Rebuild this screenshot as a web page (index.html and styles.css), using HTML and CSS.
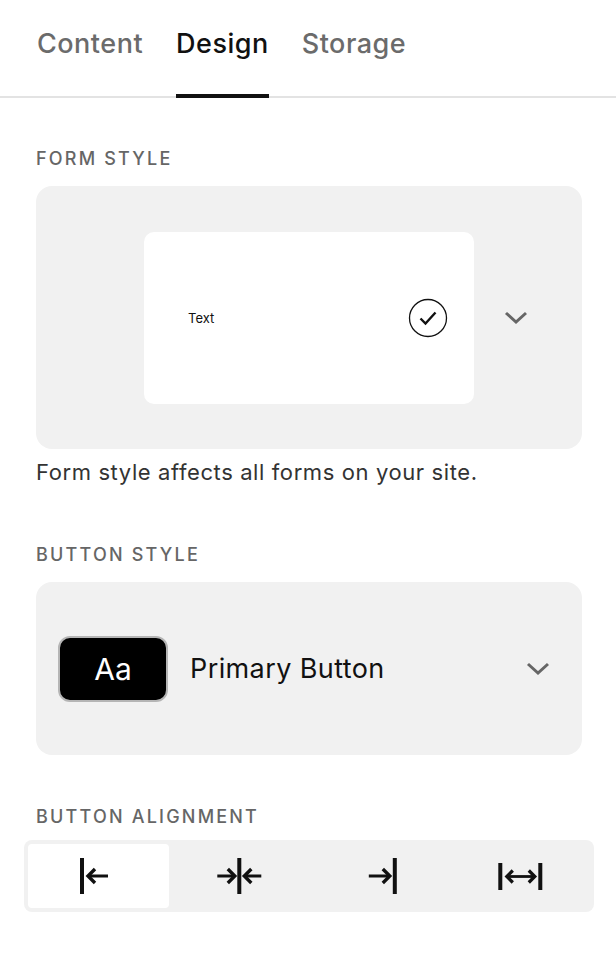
FILE: index.html
```html
<!DOCTYPE html>
<html>
<head>
<meta charset="utf-8">
<link rel="stylesheet" href="styles.css">
</head>
<body>
<div class="panel">
  <nav class="tabs">
    <div class="tab">Content</div>
    <div class="tab active">Design</div>
    <div class="tab">Storage</div>
  </nav>
  <section class="section s-form">
    <h2 class="label">FORM STYLE</h2>
    <div class="box form-box">
      <div class="form-card">
        <span class="card-text">Text</span>
        <svg class="check" width="40" height="40" viewBox="0 0 40 40"><circle cx="20" cy="20" r="18.5" fill="none" stroke="#111" stroke-width="1.3"/><path d="M12.5 20.5 L17.5 25.5 L27.5 14.5" fill="none" stroke="#111" stroke-width="2.4"/></svg>
      </div>
      <svg class="chev" width="24" height="16" viewBox="0 0 24 16"><path d="M2 3 L12 12 L22 3" fill="none" stroke="#666" stroke-width="3"/></svg>
    </div>
    <p class="hint">Form style affects all forms on your site.</p>
  </section>
  <section class="section s-button">
    <h2 class="label">BUTTON STYLE</h2>
    <div class="box button-box">
      <div class="aa">Aa</div>
      <span class="btn-name">Primary Button</span>
      <svg class="chev" width="24" height="16" viewBox="0 0 24 16"><path d="M2 3 L12 12 L22 3" fill="none" stroke="#666" stroke-width="3"/></svg>
    </div>
  </section>
  <section class="section s-align">
    <h2 class="label">BUTTON ALIGNMENT</h2>
    <div class="segmented">
      <div class="seg selected">
        <svg width="80" height="40" viewBox="0 0 80 40"><rect x="22" y="2" width="4" height="36" fill="#111"/><path d="M30 20 H50" stroke="#111" stroke-width="3"/><path d="M37 13 L30 20 L37 27" fill="none" stroke="#111" stroke-width="3.4"/></svg>
      </div>
      <div class="seg">
        <svg width="80" height="40" viewBox="0 0 80 40"><rect x="38.3" y="2" width="4" height="36" fill="#111"/><path d="M18.3 20 H35.3" stroke="#111" stroke-width="3"/><path d="M28.8 13 L35.8 20 L28.8 27" fill="none" stroke="#111" stroke-width="3.4"/><path d="M45.8 20 H62.3" stroke="#111" stroke-width="3"/><path d="M52.3 13 L45.3 20 L52.3 27" fill="none" stroke="#111" stroke-width="3.4"/></svg>
      </div>
      <div class="seg">
        <svg width="80" height="40" viewBox="0 0 80 40"><rect x="53.8" y="2" width="4" height="36" fill="#111"/><path d="M29.8 20 H50" stroke="#111" stroke-width="3"/><path d="M43.8 13 L50.8 20 L43.8 27" fill="none" stroke="#111" stroke-width="3.4"/></svg>
      </div>
      <div class="seg">
        <svg width="80" height="40" viewBox="0 0 80 40"><rect x="18.3" y="7" width="4" height="27" fill="#111"/><rect x="58.3" y="7" width="4" height="27" fill="#111"/><path d="M27 20.5 H54.5" stroke="#111" stroke-width="2.8"/><path d="M32.8 14.5 L26.8 20.5 L32.8 26.5" fill="none" stroke="#111" stroke-width="3.2"/><path d="M48.8 14.5 L54.8 20.5 L48.8 26.5" fill="none" stroke="#111" stroke-width="3.2"/></svg>
      </div>
    </div>
  </section>
</div>
</body>
</html>
```
FILE: styles.css
```css
* { box-sizing: border-box; }
html, body { margin: 0; padding: 0; background: #fff; }
body {
  font-family: Inter, "Liberation Sans", Arial, sans-serif;
  color: #111;
  width: 616px;
  height: 958px;
  overflow: hidden;
}
.panel { display: flex; flex-direction: column; }
.tabs {
  display: flex;
  gap: 33px;
  padding: 0 36px 0 37px;
  height: 98px;
  border-bottom: 2px solid #e3e3e3;
}
.tab {
  font-size: 27px;
  font-weight: 500;
  color: #6b6b6b;
  padding-top: 27px;
  height: 98px;
  letter-spacing: 0.5px;
}
.tab.active {
  color: #111;
  border-bottom: 4px solid #111;
  margin-bottom: -2px;
}
.section { padding: 0 34px 0 36px; }
.label {
  margin: 0;
  font-size: 18px;
  font-weight: 500;
  letter-spacing: 2.2px;
  color: #666;
  line-height: 20px;
}
.s-form .label { margin-top: 51px; }
.s-button .label { margin-top: 59px; }
.s-align .label { margin-top: 52px; }
.box {
  background: #f1f1f1;
  border-radius: 16px;
  margin-top: 17px;
}
.form-box {
  height: 263px;
  display: flex;
  align-items: center;
  padding-left: 108px;
}
.form-card {
  width: 330px;
  height: 172px;
  background: #fff;
  border-radius: 10px;
  display: flex;
  align-items: center;
  padding-left: 44px;
  padding-right: 26px;
  justify-content: space-between;
}
.card-text { font-size: 13px; color: #111; }
.check { display: block; }
.chev { display: block; }
.form-box .chev { margin-left: 30px; }
.hint {
  margin: 9px 0 0 0;
  font-size: 22px;
  letter-spacing: 0.6px;
  color: #333;
  line-height: 28px;
}
.button-box {
  height: 173px;
  display: flex;
  align-items: center;
  padding-left: 22px;
  padding-right: 32px;
}
.aa {
  width: 110px;
  height: 66px;
  background: #000;
  border: 2px solid #b5b5b5;
  border-radius: 12px;
  color: #fff;
  font-size: 30px;
  display: flex;
  align-items: center;
  justify-content: center;
}
.btn-name {
  font-size: 27px;
  letter-spacing: 0.4px;
  color: #111;
  margin-left: 22px;
  flex: 1;
}
.segmented {
  margin: 13px -12px 0 -12px;
  background: #f1f1f1;
  border-radius: 8px;
  padding: 4px;
  display: grid;
  grid-template-columns: repeat(4, 1fr);
  height: 72px;
}
.seg {
  display: flex;
  align-items: center;
  justify-content: center;
  border-radius: 4px;
}
.seg.selected { background: #fff; }
.seg svg { display: block; }
```
